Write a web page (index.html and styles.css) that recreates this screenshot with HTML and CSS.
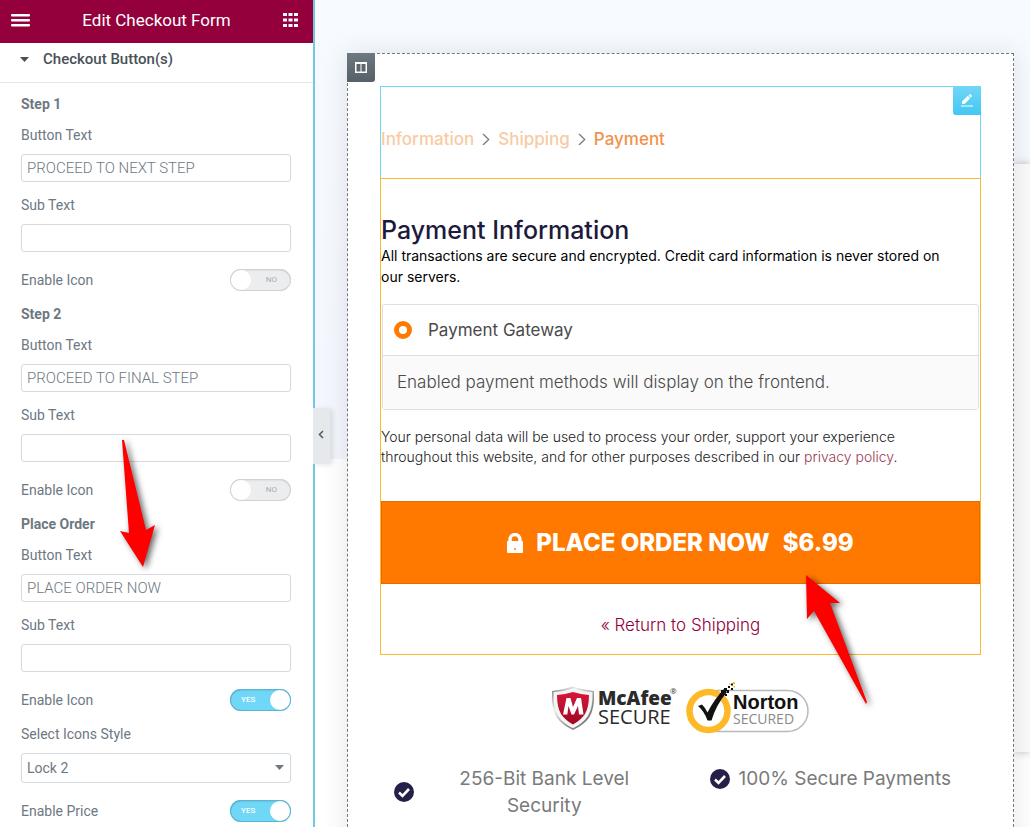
FILE: index.html
```html
<!DOCTYPE html>
<html lang="en">
<head>
  <meta charset="UTF-8" />
  <meta name="viewport" content="width=device-width, initial-scale=1" />
  <title>Edit Checkout Form</title>
  <link rel="stylesheet" href="styles.css">
</head>
<body>

  <div class="editor">

    <aside class="panel">
      <header class="panel-header">
        <button type="button" class="icon-button" aria-label="Menu">
          <svg width="19" height="13" viewBox="0 0 19 13" fill="#fff"><rect width="19" height="2.600" rx="1"/><rect y="5" width="19" height="2.600" rx="1"/><rect y="10" width="19" height="2.600" rx="1"/></svg>
        </button>
        <h1>Edit Checkout Form</h1>
        <button type="button" class="icon-button" aria-label="Widgets">
          <svg width="15" height="14" viewBox="0 0 15 14" fill="#fff"><path d="M0 0h4v3H0zM5.500 0h4v3h-4zM11 0h4v3h-4zM0 5.500h4v3H0zM5.500 5.500h4v3h-4zM11 5.500h4v3h-4zM0 11h4v3H0zM5.500 11h4v3h-4zM11 11h4v3h-4z"/></svg>
        </button>
      </header>

      <button type="button" class="section-toggle">
        <svg width="9" height="5" viewBox="0 0 9 5"><path d="M0 0h9L4.500 5z" fill="#495157"/></svg>
        Checkout Button(s)
      </button>

      <form class="controls">
        <h2>Step 1</h2>
        <div class="field">
          <label for="step1-text">Button Text</label>
          <input type="text" id="step1-text" value="PROCEED TO NEXT STEP">
        </div>
        <div class="field">
          <label for="step1-sub">Sub Text</label>
          <input type="text" id="step1-sub">
        </div>
        <div class="switch-row">
          <label for="step1-icon">Enable Icon</label>
          <span class="switch"><input type="checkbox" id="step1-icon"><span class="switch-text">NO</span></span>
        </div>

        <h2>Step 2</h2>
        <div class="field">
          <label for="step2-text">Button Text</label>
          <input type="text" id="step2-text" value="PROCEED TO FINAL STEP">
        </div>
        <div class="field">
          <label for="step2-sub">Sub Text</label>
          <input type="text" id="step2-sub">
        </div>
        <div class="switch-row">
          <label for="step2-icon">Enable Icon</label>
          <span class="switch"><input type="checkbox" id="step2-icon"><span class="switch-text">NO</span></span>
        </div>

        <h2>Place Order</h2>
        <div class="field">
          <label for="order-text">Button Text</label>
          <input type="text" id="order-text" value="PLACE ORDER NOW">
        </div>
        <div class="field">
          <label for="order-sub">Sub Text</label>
          <input type="text" id="order-sub">
        </div>
        <div class="switch-row">
          <label for="order-icon">Enable Icon</label>
          <span class="switch"><input type="checkbox" id="order-icon" checked><span class="switch-text">YES</span></span>
        </div>
        <div class="field">
          <label for="icon-style">Select Icons Style</label>
          <div class="select-wrap">
            <select id="icon-style">
              <option>Lock 2</option>
            </select>
            <svg width="9" height="5" viewBox="0 0 9 5"><path d="M0 0h9L4.500 5z" fill="#6d7882"/></svg>
          </div>
        </div>
        <div class="switch-row">
          <label for="order-price">Enable Price</label>
          <span class="switch"><input type="checkbox" id="order-price" checked><span class="switch-text">YES</span></span>
        </div>
      </form>

      <button type="button" class="panel-collapse" aria-label="Hide panel">
        <svg width="6" height="9" viewBox="0 0 6 9"><path d="M5 1L1.500 4.500 5 8" fill="none" stroke="#556068" stroke-width="1.600"/></svg>
      </button>
    </aside>

    <main class="canvas">
      <section class="checkout">
        <button type="button" class="handle handle-column" aria-label="Edit column">
          <svg width="12" height="11" viewBox="0 0 12 11"><path d="M0 0h12v11H0z" fill="#fff"/><path d="M1.500 2H5.500v7.500h-4zM6.500 2h4v7.500h-4z" fill="#5b666e"/></svg>
        </button>

        <div class="widget">
          <button type="button" class="handle handle-widget" aria-label="Edit widget">
            <svg width="12" height="13" viewBox="0 0 12 13" fill="#fff"><path d="M1 10V7.500L6.800 1.800 9.200 4.200 3.500 10zM7.500 1.200L8.500.3Q9 0 9.500.3L10.800 1.500Q11 2 10.700 2.500L9.800 3.500zM0 11.500h12v1H0z"/></svg>
          </button>

          <nav class="steps">
            <a href="#">Information</a>
            <svg width="8" height="12" viewBox="0 0 8 12"><path d="M1 1L6.700 6.500 1 12" fill="none" stroke="#7a7a7a" stroke-width="1.300"/></svg>
            <a href="#">Shipping</a>
            <svg width="8" height="12" viewBox="0 0 8 12"><path d="M1 1L6.700 6.500 1 12" fill="none" stroke="#7a7a7a" stroke-width="1.300"/></svg>
            <a href="#" class="active">Payment</a>
          </nav>

          <div class="payment">
            <h2>Payment Information</h2>
            <p class="intro">All transactions are secure and encrypted. Credit card information is never stored on our servers.</p>

            <div class="methods">
              <div class="method">
                <input type="radio" id="gateway" name="gateway" checked>
                <label for="gateway">Payment Gateway</label>
              </div>
              <p class="method-info">Enabled payment methods will display on the frontend.</p>
            </div>

            <p class="privacy">Your personal data will be used to process your order, support your experience throughout this website, and for other purposes described in our <a href="#">privacy policy</a>.</p>

            <button type="button" class="place-order">
              <svg width="16" height="20" viewBox="0 0 16 20"><path d="M3 9V6.500a5 5 0 0 1 10 0V9" fill="none" stroke="#fff" stroke-width="3.400"/><rect y="8" width="16" height="12" rx="1" fill="#fff"/><path d="M7.300 15h1.400v2H7.300z" fill="#ff7900"/></svg>
              <span>PLACE ORDER NOW</span>
              <span>$6.99</span>
            </button>

            <a href="#" class="return-link">« Return to Shipping</a>
          </div>
        </div>

        <div class="badges">
          <svg width="126" height="52" viewBox="0 0 126 52" role="img" aria-label="McAfee Secure">
            <defs>
              <linearGradient id="silver" x1="0" y1="0" x2="1" y2="1">
                <stop offset="0" stop-color="#777"/><stop offset=".3" stop-color="#eee"/><stop offset=".6" stop-color="#999"/><stop offset="1" stop-color="#555"/>
              </linearGradient>
              <linearGradient id="red" x1="0" y1="0" x2="0" y2="1">
                <stop offset="0" stop-color="#d8173a"/><stop offset="1" stop-color="#a00722"/>
              </linearGradient>
            </defs>
            <path d="M1 9Q12 8 22 4.500 32 8 43 9 44 26 38.500 35 33 43 22 48 11 43 5.500 35 0 26 1 9z" fill="url(#silver)"/>
            <path d="M2.500 10.300Q13 9.500 22 6.200 31 9.500 41.500 10.300 42 26 37 34 32 41.500 22 46.200 12 41.500 7 34 2 26 2.500 10.300z" fill="#f4f4f4"/>
            <path d="M6 13Q14 12.500 22 10 30 12.500 38 13 38 25 34 32 30 38 22 42.500 14 38 10 32 6 25 6 13z" fill="url(#red)"/>
            <path d="M12 32.500L15.500 16h4L22 25l4-9h4l2.500 16.500h-4.500L27 24l-4 8.500h-2.500L17.500 24l-1.200 8.500z" fill="#fff"/>
            <text x="47" y="23" class="mcafee-name">McAfee</text>
            <text x="119" y="12" class="mcafee-reg">®</text>
            <text x="47" y="42" class="mcafee-secure">SECURE</text>
          </svg>
          <svg width="126" height="52" viewBox="0 0 126 52" role="img" aria-label="Norton Secured">
            <rect x="12" y="8.500" width="111" height="41" rx="20.500" fill="#fff" stroke="#b9b9b9" stroke-width="1.500"/>
            <circle cx="23.500" cy="29" r="19" fill="#fff" stroke="#fdb927" stroke-width="6.500"/>
            <path d="M13 24l4-1.500q3.500 3.500 5.500 8Q29 17.500 39 7l3 3Q31 23 26.500 38.500h-4Q19.500 29.500 13 24z" fill="#111"/>
            <path d="M39 6h3v3h-3zM43 4h2v2h-2zM42 8h2v3h-2zM46 6h2v2h-2zM46 1.500h2v2h-2zM40 12h2v2h-2zM36 8h2v3h-2z" fill="#111"/>
            <path d="M48 0h2v2h-2zM48.500 4h1.500v1.500h-1.500zM44 1.500h1.500V3H44z" fill="#fdb927"/>
            <text x="48" y="27" class="norton-name">Norton</text>
            <text x="48" y="42" class="norton-secured">SECURED</text>
          </svg>
        </div>

        <ul class="features">
          <li>
            <svg width="20" height="20" viewBox="0 0 20 20"><circle cx="10" cy="10" r="10" fill="#242048"/><path d="M5 10.500l3.500 3.500L15 7" fill="none" stroke="#fff" stroke-width="2.600"/></svg>
            <span>256-Bit Bank Level Security</span>
          </li>
          <li>
            <svg width="20" height="20" viewBox="0 0 20 20"><circle cx="10" cy="10" r="10" fill="#242048"/><path d="M5 10.500l3.500 3.500L15 7" fill="none" stroke="#fff" stroke-width="2.600"/></svg>
            <span>100% Secure Payments</span>
          </li>
        </ul>
      </section>

      <div class="next-column"></div>
    </main>

    <!-- Annotation arrows -->
    <svg class="arrow arrow-field" width="50" height="140" viewBox="0 0 50 140"><path d="M12 0h2L36 90l9-5-12 42L10 91l9 2z" fill="#f00"/></svg>
    <svg class="arrow arrow-button" width="75" height="140" viewBox="0 0 75 140"><path d="M6 0L40 28h-10L67 127l-1 2L14 36l-7 8z" fill="#f00"/></svg>

  </div>

</body>
</html>
```

FILE: styles.css
```css
:root {
  --brand: #93003c;
  --blue: #71d7f7;
  --orange: #ff7900;
  --text: #6d7882;
  --border: #d5dadf;
  --font-panel: Roboto, Arial, sans-serif;
  --font-page: Inter, Arial, sans-serif;
}

* {
  box-sizing: border-box;
}

body {
  margin: 0;
  font-family: var(--font-page);
}

h1, h2, p, ul {
  margin: 0;
  padding: 0;
}

a {
  color: inherit;
  text-decoration: none;
}

button {
  border: none;
  padding: 0;
  cursor: pointer;
  font-family: inherit;
}

svg {
  display: block;
  flex-shrink: 0;
}

.editor {
  position: relative;
  display: flex;
  height: 100vh;
  overflow: hidden;
}

/* Left panel */
.panel {
  position: relative;
  z-index: 2;
  flex: 0 0 315px;
  background: #fff;
  border-right: 2px solid #6ec8e6;
  font-family: var(--font-panel);
  font-size: 14px;
  line-height: 16px;
  color: var(--text);
}

.panel-header {
  display: flex;
  align-items: center;
  justify-content: space-between;
  height: 43px;
  padding: 0 15px 3px 11px;
  background: var(--brand);
}

.panel-header h1 {
  font-size: 17px;
  font-weight: 400;
  color: #fff;
}

.icon-button {
  background: none;
}

.section-toggle {
  display: flex;
  align-items: center;
  gap: 14px;
  width: 100%;
  padding: 8px 20px 15px;
  border-bottom: 1px solid #e6e9ec;
  background: #fff;
  font-size: 15px;
  line-height: 16px;
  font-weight: 500;
  color: #495157;
}

.controls {
  display: flex;
  flex-direction: column;
  gap: 15px;
  padding: 13px 22px 14px 21px;
}

.controls h2 {
  font-size: 14px;
  font-weight: 700;
}

.field {
  display: flex;
  flex-direction: column;
  gap: 11px;
}

.field input,
.field select {
  width: 100%;
  height: 28px;
  padding: 0 5px;
  border: 1px solid var(--border);
  border-radius: 3px;
  background: #fff;
  font-family: inherit;
  font-size: 14px;
  color: var(--text);
}

.field input {
  font-size: 15px;
  font-weight: 300;
}

.field select {
  display: block;
  height: 30px;
  appearance: none;
}

.select-wrap {
  position: relative;
}

.select-wrap svg {
  position: absolute;
  top: 12px;
  right: 7px;
  pointer-events: none;
}

.switch-row {
  display: flex;
  align-items: center;
  justify-content: space-between;
  padding-top: 2px;
}

.switch {
  position: relative;
  display: flex;
}

.switch input {
  appearance: none;
  width: 61px;
  height: 22px;
  margin: 0;
  border-radius: 11px;
  background: #ebedee;
  box-shadow: inset 0 0 0 1px #d0d3d5, inset 0 1px 2px rgba(0, 0, 0, 0.15);
}

.switch input::before {
  content: "";
  display: block;
  width: 20px;
  height: 20px;
  margin: 1px;
  border-radius: 50%;
  background: #fff;
}

.switch input:checked {
  background: var(--blue);
  box-shadow: inset 0 0 0 1px #5bb4d0, inset 0 1px 2px rgba(0, 0, 0, 0.25);
}

.switch input:checked::before {
  margin-left: 40px;
}

.switch-text {
  position: absolute;
  top: 3px;
  right: 14px;
  font-size: 8px;
  color: #a4afb7;
  pointer-events: none;
}

.switch input:checked + .switch-text {
  right: auto;
  left: 11px;
  font-weight: 500;
  color: #fff;
}

.panel-collapse {
  position: absolute;
  top: 408px;
  right: -17px;
  display: flex;
  align-items: center;
  width: 17px;
  height: 56px;
  padding: 0 0 4px 5px;
  border-radius: 0 3px 3px 0;
  background: #e6e9ec;
  box-shadow: 3px 1px 5px rgba(0, 0, 0, 0.1);
}

/* Page preview */
.canvas {
  display: flex;
  flex: 1;
  align-items: flex-start;
  min-width: 0;
  padding: 53px 0 0 32px;
  background: linear-gradient(#f7faff, #f3f6fc) no-repeat #fff;
  background-size: 100% 459px;
}

.checkout {
  position: relative;
  z-index: 1;
  flex: 1;
  min-width: 0;
  padding: 32px;
  border: 1px dashed #6d7882;
  background: #fff;
  box-shadow: 0 0 25px rgba(0, 0, 0, 0.1);
}

.next-column {
  flex: 0 0 16px;
  height: 588px;
  margin-top: 111px;
  background: #fafafa;
  box-shadow: 0 0 8px rgba(0, 0, 0, 0.25);
}

.handle {
  position: absolute;
  display: flex;
  align-items: center;
  justify-content: center;
  width: 28px;
  height: 29px;
}

.handle-column {
  top: -1px;
  left: -1px;
  border-radius: 0 0 3px 0;
  background: linear-gradient(#6d7882, #556068);
}

.handle-widget {
  top: 0;
  right: 0;
  border-radius: 0 0 0 3px;
  background: linear-gradient(#71d7f7, #43c7f3);
}

.widget {
  position: relative;
}

.steps {
  display: flex;
  align-items: center;
  gap: 8px;
  height: 92px;
  padding-top: 12px;
  border: 1px solid var(--blue);
  border-bottom: none;
  font-size: 17px;
  font-weight: 500;
  color: #f7cba4;
}

.steps .active {
  color: #f0924a;
}

.payment {
  border: 1px solid #fcb92c;
}

.payment h2 {
  padding-top: 36px;
  font-size: 25px;
  line-height: 30px;
  font-weight: 500;
  color: #1d1a3d;
}

.intro {
  padding-right: 20px;
  font-size: 14px;
  line-height: 21px;
  color: #000;
}

.methods {
  margin: 17px 1px;
  border: 1px solid #dddfe0;
  border-radius: 3px;
  font-size: 17px;
  color: #4a4a4a;
}

.method {
  display: flex;
  align-items: center;
  gap: 16px;
  height: 50px;
  padding: 0 11px;
}

.method input {
  appearance: none;
  width: 18px;
  height: 18px;
  margin: 0;
  border: 5px solid var(--orange);
  border-radius: 50%;
  background: #fff;
}

.method-info {
  padding: 14px;
  border-top: 1px solid #dddfe0;
  background: #fafafa;
  line-height: 25px;
  font-weight: 300;
}

.privacy {
  padding-right: 20px;
  font-size: 14px;
  line-height: 20px;
  font-weight: 300;
  color: #222;
}

.privacy a {
  color: #9c3a52;
}

.place-order {
  display: flex;
  align-items: center;
  justify-content: center;
  gap: 13px;
  width: 100%;
  height: 83px;
  margin: 34px 0 29px;
  border: 1px solid #e56d00;
  background: var(--orange);
  font-size: 24px;
  font-weight: 800;
  color: #fff;
}

.return-link {
  display: block;
  padding-bottom: 16px;
  font-size: 17px;
  line-height: 25px;
  font-weight: 300;
  text-align: center;
  color: #93003c;
}

.badges {
  display: flex;
  justify-content: center;
  gap: 8px;
  margin-top: 27px;
}

.mcafee-name {
  font: 800 19px "Open Sans", sans-serif;
  fill: #2b2b2b;
}

.mcafee-reg {
  font: 8px "Open Sans", sans-serif;
  fill: #2b2b2b;
}

.mcafee-secure {
  font: 20px "Open Sans", sans-serif;
  fill: #2b2b2b;
}

.norton-name {
  font: 700 20px "Liberation Sans", sans-serif;
  fill: #111;
}

.norton-secured {
  font: 14px "Open Sans", sans-serif;
  fill: #8a8a8a;
}

.features {
  display: grid;
  grid-template-columns: 1fr 1fr;
  align-items: start;
  margin-top: 31px;
  list-style: none;
  font-size: 19px;
  line-height: 27px;
  text-align: center;
  color: #7a7a7a;
}

.features li {
  display: flex;
  align-items: center;
  justify-content: center;
  gap: 8px;
  padding: 0 14px;
}

/* Annotation arrows */
.arrow {
  position: absolute;
  z-index: 3;
  overflow: visible;
  pointer-events: none;
  filter: drop-shadow(3px 2px 3px rgba(0, 0, 0, 0.6));
}

.arrow-field {
  top: 440px;
  left: 110px;
}

.arrow-button {
  top: 575px;
  left: 800px;
}
```
